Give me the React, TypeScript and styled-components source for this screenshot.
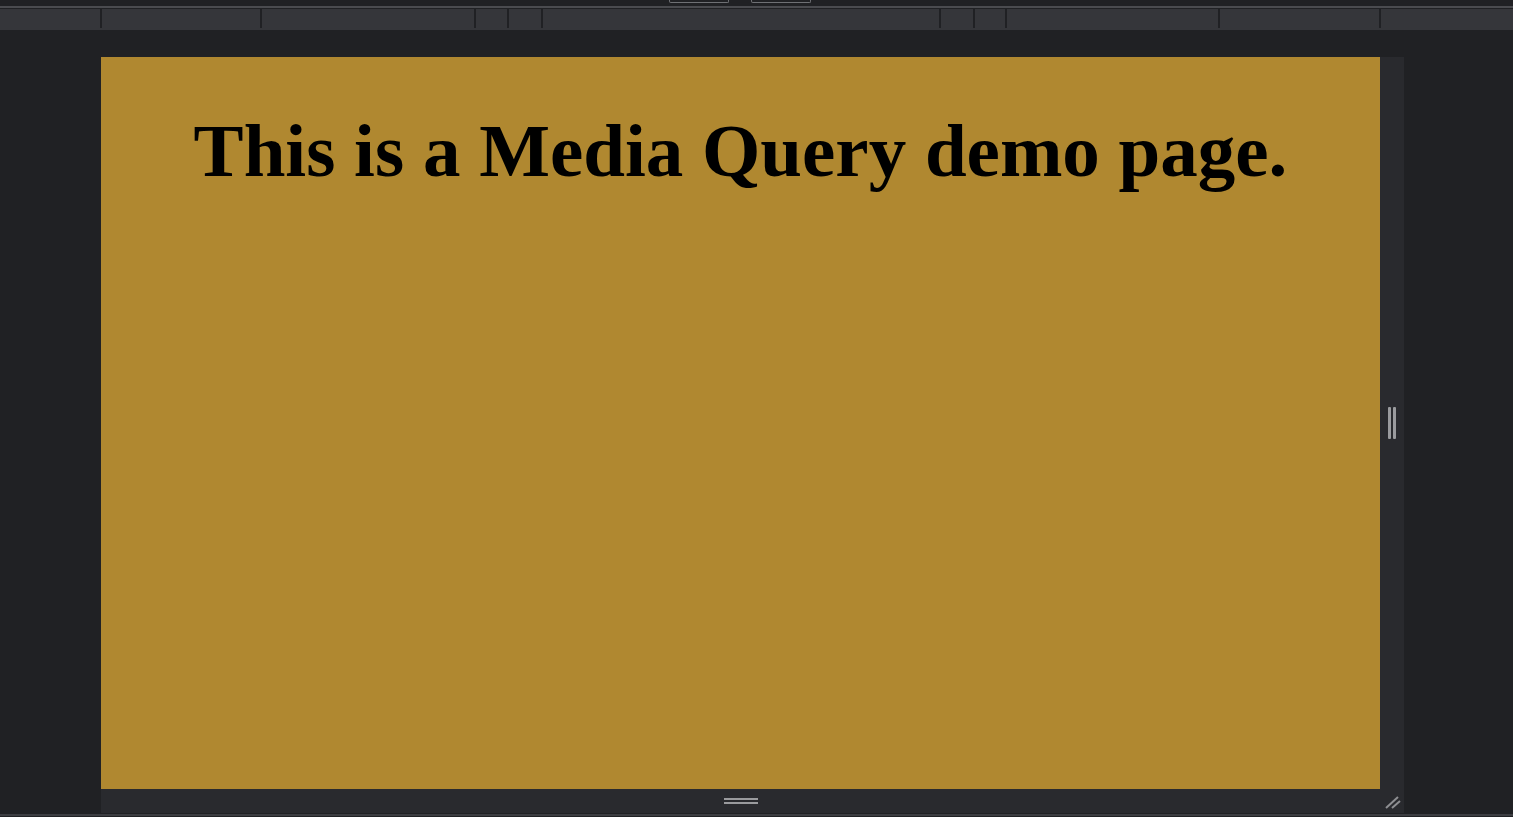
import React from "react";
import styled, { createGlobalStyle } from "styled-components";

const Global = createGlobalStyle`
  html, body { margin: 0; padding: 0; background: #202124; overflow: hidden; }
  #root { height: 817px; }
`;

const Page = styled.div`
  height: 817px;
  display: flex;
  flex-direction: column;
  background: #202124;
`;

const TopBar = styled.div`
  display: flex;
  align-items: flex-end;
  padding-left: 669px;
  gap: 22px;
  box-sizing: border-box;
  border-bottom: 2px solid #4a4b4f;
  height: 8px;
  padding-bottom: 3px;
`;

const TopButton = styled.div`
  width: 60px;
  height: 6px;
  border: 1px solid #6e7074;
  border-top: none;
  border-radius: 0 0 2px 2px;
  box-sizing: border-box;
`;

const Ruler = styled.div<{ cols: number[] }>`
  margin-top: 1px;
  height: 21px;
  background: #35363a;
  display: grid;
  grid-template-columns: ${(p) => p.cols.map((c) => `${c}px`).join(" ")} 1fr;
`;

const Segment = styled.div<{ first?: boolean }>`
  height: 19px;
  box-sizing: border-box;
  border-left: ${(p) => (p.first ? "none" : "2px solid #202124")};
`;

const Stage = styled.div`
  margin-top: 27px;
  padding-left: 101px;
  display: flex;
  flex-direction: column;
`;

const FrameRow = styled.div`
  display: flex;
  height: 732px;
`;

const Viewport = styled.div`
  width: 1279px;
  background: #b08830;
  text-align: center;
  overflow: hidden;
`;

const Heading = styled.h1`
  margin: 51px 0 0;
  font-family: "Liberation Serif", "Times New Roman", serif;
  font-weight: bold;
  font-size: 75px;
  color: #000;
`;

const SideHandle = styled.div`
  width: 24px;
  background: #292a2e;
  display: flex;
  align-items: center;
  justify-content: center;
  gap: 2px;
`;

const VLine = styled.div`
  width: 3px;
  height: 32px;
  background: #9a9b9e;
  border-radius: 1px;
`;

const BottomRow = styled.div`
  width: 1303px;
  height: 24px;
  background: #292a2e;
  position: relative;
  display: flex;
  flex-direction: column;
  align-items: center;
  justify-content: center;
  gap: 2px;
  padding-right: 24px;
  box-sizing: border-box;
`;

const HLine = styled.div`
  width: 34px;
  height: 2px;
  background: #9a9b9e;
`;

const Corner = styled.svg`
  position: absolute;
  right: 3px;
  bottom: 4px;
`;

const BottomLine = styled.div`
  margin-top: 1px;
  height: 2px;
  background: #3c3d41;
`;

const cols = [100, 160, 214, 33, 34, 398, 34, 32, 213, 161];

export default function App() {
  return (
    <Page>
      <Global />
      <TopBar>
        <TopButton />
        <TopButton />
      </TopBar>
      <Ruler cols={cols}>
        {cols.map((_, i) => (
          <Segment key={i} first={i === 0} />
        ))}
        <Segment />
      </Ruler>
      <Stage>
        <FrameRow>
          <Viewport>
            <Heading>This is a Media Query demo page.</Heading>
          </Viewport>
          <SideHandle>
            <VLine />
            <VLine />
          </SideHandle>
        </FrameRow>
        <BottomRow>
          <HLine />
          <HLine />
          <Corner width="16" height="14" viewBox="0 0 16 14">
            <line x1="1" y1="13" x2="13" y2="2" stroke="#8e8f92" strokeWidth="2" />
            <line x1="7" y1="13" x2="15" y2="6" stroke="#8e8f92" strokeWidth="2" />
          </Corner>
        </BottomRow>
      </Stage>
      <BottomLine />
    </Page>
  );
}
